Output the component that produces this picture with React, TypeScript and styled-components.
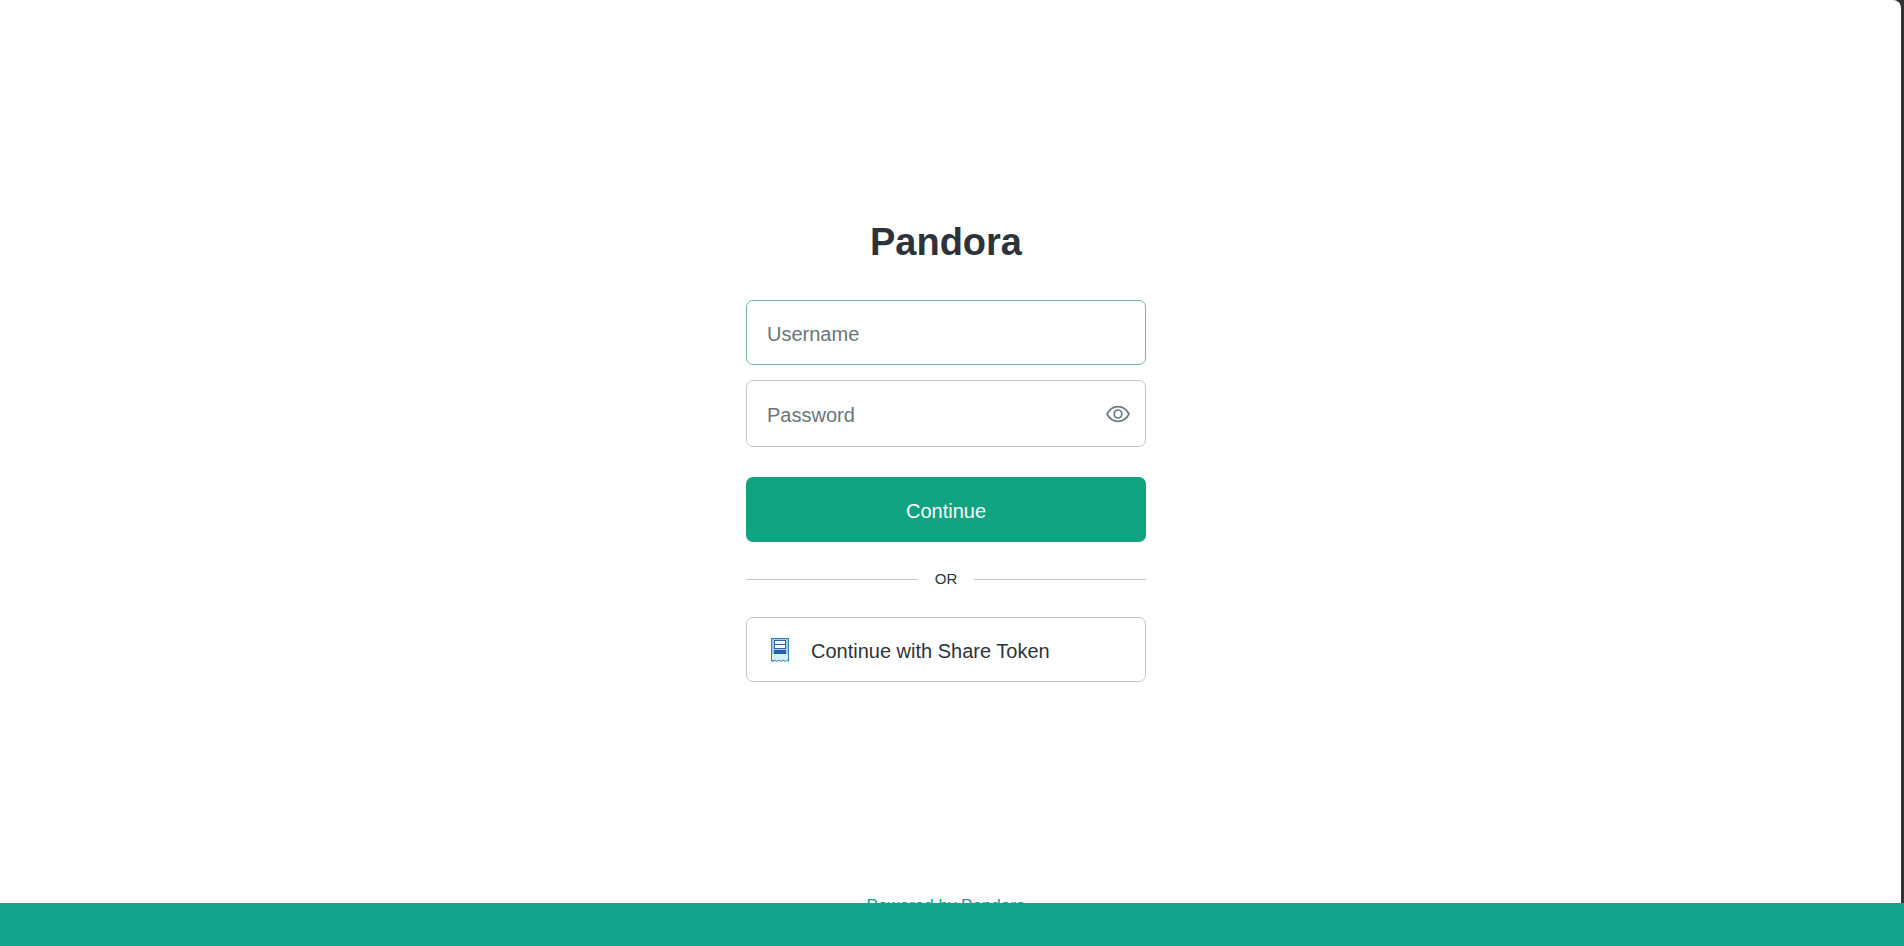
import React, { useState } from "react";
import styled, { createGlobalStyle } from "styled-components";

const GlobalStyle = createGlobalStyle`
  *, *::before, *::after { box-sizing: border-box; }
  body {
    margin: 0;
    background: #333333;
    color: #2d333a;
    font-family: "Liberation Sans", Arial, sans-serif;
  }
`;

const Page = styled.div`
  display: flex;
  flex-direction: column;
  align-items: center;
  min-height: 100vh;
  margin-right: 3px;
  padding: 216px 9px 28px 0;
  border-top-right-radius: 8px;
  background: #ffffff;
`;

const Card = styled.main`
  width: 100%;
  max-width: 400px;
`;

const Title = styled.h1`
  margin: 0 0 32px;
  font-size: 38px;
  line-height: 52px;
  font-weight: 700;
  text-align: center;
`;

const Form = styled.form`
  display: flex;
  flex-direction: column;
`;

const Field = styled.div<{ $active?: boolean; $tall?: boolean }>`
  display: flex;
  align-items: center;
  height: ${(p) => (p.$tall ? 67 : 65)}px;
  margin-bottom: ${(p) => (p.$tall ? 30 : 15)}px;
  padding-right: 15px;
  border: 1px solid ${(p) => (p.$active ? "#6fb7b0" : "#c2c8d0")};
  border-radius: 7px;
`;

const TextInput = styled.input`
  flex: 1;
  min-width: 0;
  height: 100%;
  padding: 3px 0 0 20px;
  border: 0;
  outline: 0;
  background: transparent;
  color: #2d333a;
  font: inherit;
  font-size: 20px;

  &::placeholder {
    color: #6a757c;
    opacity: 1;
  }
`;

const IconButton = styled.button`
  display: flex;
  padding: 0;
  border: 0;
  background: transparent;
  color: #6a7b82;
  cursor: pointer;
`;

const PrimaryButton = styled.button`
  height: 65px;
  padding: 3px 20px 0;
  border: 0;
  border-radius: 7px;
  background: #10a37f;
  color: #ffffff;
  font: inherit;
  font-size: 20px;
  cursor: pointer;
`;

const Divider = styled.div`
  display: flex;
  align-items: center;
  gap: 17px;
  margin: 27px 0 28px;
  font-size: 15px;
  line-height: 20px;

  &::before,
  &::after {
    content: "";
    flex: 1;
    height: 1px;
    background: #c2c8d0;
  }
`;

const TokenButton = styled.button`
  display: flex;
  align-items: center;
  gap: 22px;
  width: 100%;
  height: 65px;
  padding: 0 24px;
  border: 1px solid #c2c8d0;
  border-radius: 7px;
  background: #ffffff;
  color: #2d333a;
  font: inherit;
  font-size: 20px;
  cursor: pointer;
`;

const TokenLabel = styled.span`
  padding-top: 3px;
`;

const Footer = styled.footer`
  margin-top: auto;
  font-size: 17px;
  line-height: 24px;
`;

const FooterLink = styled.a`
  color: #10a37f;
  text-decoration: none;
`;

const BottomBar = styled.div`
  position: fixed;
  right: 0;
  bottom: 0;
  left: 0;
  height: 43px;
  background: #12a38f;
`;

const EyeIcon = () => (
  <svg width="24" height="18" viewBox="0 0 24 18" fill="none" stroke="currentColor" strokeWidth="1.7" aria-hidden="true">
    <path d="M1 9C3.600 4 7.400 1.700 12 1.700S20.400 4 23 9C20.400 14 16.600 16.300 12 16.300S3.600 14 1 9Z" strokeLinejoin="round" />
    <ellipse cx="12" cy="9" rx="3.800" ry="4" />
  </svg>
);

const ReceiptIcon = () => (
  <svg width="18" height="24" viewBox="0 0 18 24" aria-hidden="true">
    <path d="M0 0H18V24L16 22.500L14 24L12 22.500L10 24L8 22.500L6 24L4 22.500L2 24L0 23Z" fill="#3b7db9" />
    <path d="M1 1H17V21.500L16 22L14 23L12 21.500L10 23L8 21.500L6 23L4 21.500L2 22.500L1 22Z" fill="#d0f3f8" />
    <path d="M1 1H17V16H1Z" fill="#9fcfdd" />
    <path d="M3 2H15V11H3Z" fill="#2f62a8" />
    <path d="M4 3H14V6H4ZM4 7H14V10H4Z" fill="#ffffff" />
    <path d="M4 4.500H14V5.200H4Z" fill="#c4d3e6" />
    <path d="M3 12H15V16H3Z" fill="#285ea6" />
  </svg>
);

export default function App() {
  const [visible, setVisible] = useState(false);

  return (
    <>
      <GlobalStyle />
      <Page>
        <Card>
          <Title>Pandora</Title>
          <Form onSubmit={(e: React.FormEvent) => e.preventDefault()}>
            <Field $active>
              <TextInput type="text" name="username" placeholder="Username" aria-label="Username" />
            </Field>
            <Field $tall>
              <TextInput
                type={visible ? "text" : "password"}
                name="password"
                placeholder="Password"
                aria-label="Password"
              />
              <IconButton type="button" aria-label="Show password" onClick={() => setVisible(!visible)}>
                <EyeIcon />
              </IconButton>
            </Field>
            <PrimaryButton type="submit">Continue</PrimaryButton>
          </Form>
          <Divider>OR</Divider>
          <TokenButton type="button">
            <ReceiptIcon />
            <TokenLabel>Continue with Share Token</TokenLabel>
          </TokenButton>
        </Card>
        <Footer>
          <FooterLink href="#">Powered by Pandora</FooterLink>
        </Footer>
      </Page>
      <BottomBar />
    </>
  );
}
